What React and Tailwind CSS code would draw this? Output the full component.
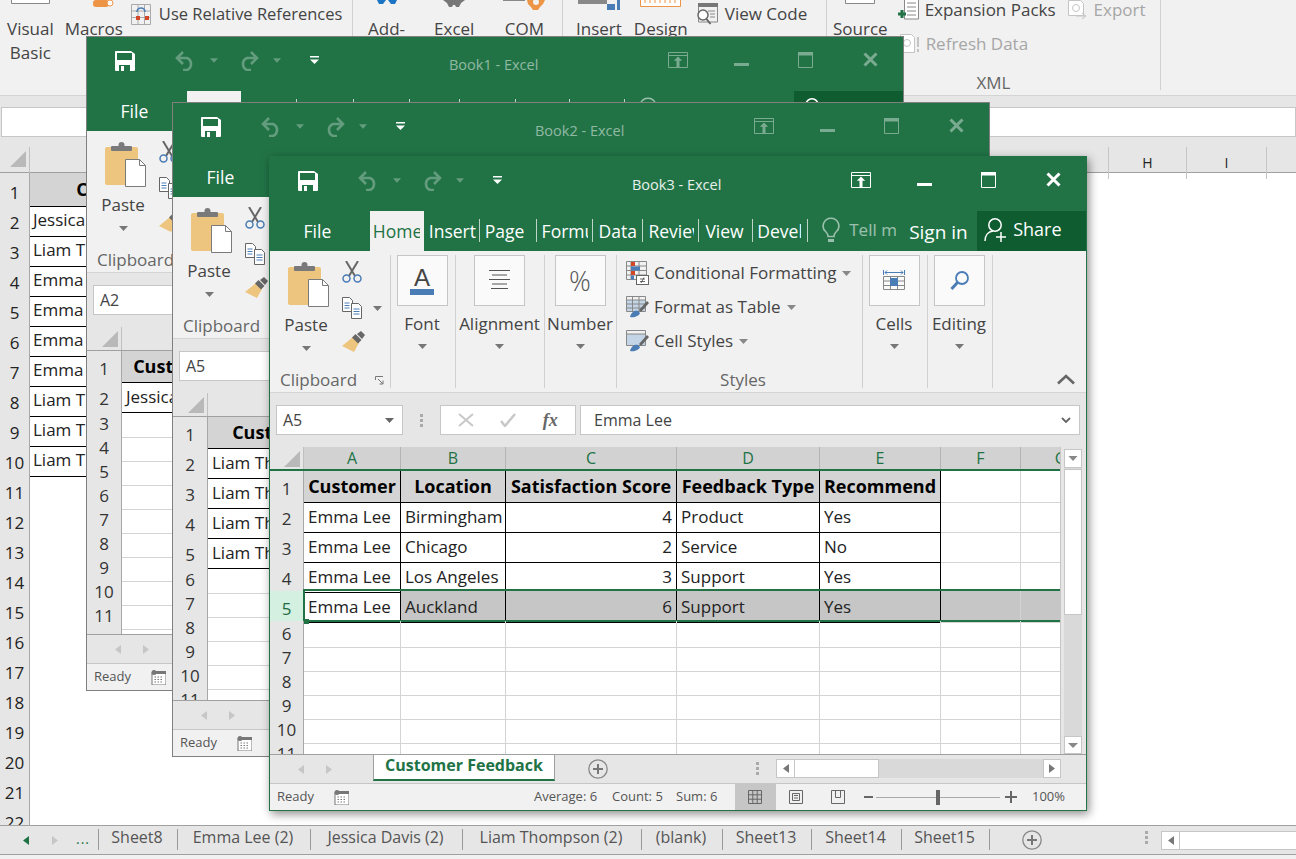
import React from 'react';

const GREEN = '#217346';

function Caret({ color = '#777777', w = 9, h = 5 }) {
  return (
    <svg width={w} height={h} viewBox="0 0 9 5" className="block shrink-0">
      <path d="M0 0h9L4.5 5z" fill={color} />
    </svg>
  );
}

function SaveIcon() {
  return (
    <svg width="20" height="20" viewBox="0 0 20 20" className="block">
      <path d="M1 0h15l4 3v16a1 1 0 0 1-1 1H1a1 1 0 0 1-1-1V1a1 1 0 0 1 1-1z" fill="#fff" />
      <rect x="2" y="2" width="15" height="7" fill={GREEN} />
      <rect x="4" y="14" width="11" height="6" fill={GREEN} />
      <rect x="6" y="15" width="3" height="5" fill="#fff" />
    </svg>
  );
}

function UndoIcon({ flip }) {
  return (
    <svg width="21" height="20" viewBox="0 0 21 20" className={flip ? 'block -scale-x-100' : 'block'}>
      <path d="M8 1 2 7l6 6M2 7h10a6.5 6.5 0 0 1 0 12H8" fill="none" stroke="#fff" strokeOpacity="0.3" strokeWidth="2.6" />
    </svg>
  );
}

function QatIcon() {
  return (
    <svg width="9" height="8" viewBox="0 0 9 8" className="block">
      <rect width="9" height="1.5" fill="#fff" />
      <path d="M0 3.4h9L4.5 8z" fill="#fff" />
    </svg>
  );
}

function DisplayIcon() {
  return (
    <svg width="20" height="16" viewBox="0 0 20 16" className="block">
      <path d="M.5.5h19v15H.5zM.5 3.5h19" fill="none" stroke="#fff" />
      <path d="M10 4.5l4.2 4.2h-2.7V15h-3V8.7H5.8z" fill="#fff" />
    </svg>
  );
}

function MaxIcon() {
  return (
    <svg width="15" height="16" viewBox="0 0 15 16" className="block">
      <path d="M.5.5h14v15H.5z" fill="none" stroke="#fff" />
      <rect width="15" height="3.5" fill="#fff" />
    </svg>
  );
}

function CloseIcon() {
  return (
    <svg width="15" height="15" viewBox="0 0 15 15" className="block">
      <path d="M1.5 1.5l12 12M13.5 1.5l-12 12" stroke="#fff" strokeWidth="3" />
    </svg>
  );
}

function BulbIcon() {
  return (
    <svg width="18" height="26" viewBox="0 0 18 26" className="block">
      <path d="M9 1.2a7.8 7.8 0 0 0-5 13.8c1.3 1.2 2 2.6 2 4.5h6c0-1.9.7-3.3 2-4.5A7.8 7.8 0 0 0 9 1.2z" fill="none" stroke="#fff" strokeOpacity="0.55" strokeWidth="1.6" />
      <path d="M6 22h6v3H6z" fill="#fff" fillOpacity="0.55" />
    </svg>
  );
}

function ShareIcon() {
  return (
    <svg width="24" height="26" viewBox="0 0 24 26" className="block">
      <circle cx="11" cy="8" r="6.2" fill="none" stroke="#fff" strokeWidth="1.5" />
      <path d="M1 24c0-6 3.5-9.500 8-10M17 15v10M12 20h10" fill="none" stroke="#fff" strokeWidth="1.5" />
    </svg>
  );
}

function PasteIcon() {
  return (
    <svg width="42" height="46" viewBox="0 0 42 46" className="block">
      <rect x="0" y="5" width="33" height="38" rx="2" fill="#edc57e" />
      <rect x="6" y="4" width="21" height="5" rx="1" fill="#7a7a7a" />
      <circle cx="16.500" cy="3" r="3" fill="#7a7a7a" />
      <path d="M20.500 17.500h14l6 6v21h-20z" fill="#fff" stroke="#7a7a7a" />
      <path d="M34.500 17.500v6h6" fill="none" stroke="#7a7a7a" />
    </svg>
  );
}

function ScissorsIcon() {
  return (
    <svg width="20" height="22" viewBox="0 0 20 22" className="block">
      <path d="M4 0l9 15M16 0l-9 15" stroke="#666" strokeWidth="2" />
      <circle cx="4.500" cy="17.500" r="3.500" fill="none" stroke="#4a7cb5" strokeWidth="1.5" />
      <circle cx="15.500" cy="17.500" r="3.500" fill="none" stroke="#4a7cb5" strokeWidth="1.5" />
    </svg>
  );
}

function CopyIcon() {
  return (
    <svg width="20" height="22" viewBox="0 0 20 22" className="block">
      <path d="M.5.5h7l3 3v11H.5z" fill="#fff" stroke="#666" />
      <path d="M2.500 6h5M2.500 8.500h5M2.500 11h5" stroke="#4a7cb5" />
      <path d="M9.500 6.500h7l3 3v12h-10z" fill="#fff" stroke="#666" />
      <path d="M11.500 12h6M11.500 14.500h6M11.500 17h6" stroke="#4a7cb5" />
    </svg>
  );
}

function BrushIcon() {
  return (
    <svg width="23" height="22" viewBox="0 0 23 22" className="block">
      <path d="M11 6l6 6-5 9-12-6z" fill="#edc57e" />
      <path d="M10 6.500L13.500 3l6 6-3.500 3.500z" fill="#666" />
      <path d="M15 3l4-3 4 4-3 4z" fill="#666" />
    </svg>
  );
}

function LauncherIcon() {
  return (
    <svg width="9" height="9" viewBox="0 0 9 9" className="block">
      <path d="M.5 4V.5H8M3 3l5 5M8 4.500V8H4.500" fill="none" stroke="#777" />
    </svg>
  );
}

function AlignIcon() {
  return (
    <svg width="21" height="22" viewBox="0 0 21 22" className="block">
      <path d="M0 .5h21M3 5h15M0 9.500h21M3 14h15M2 18.500h17" stroke="#555" />
    </svg>
  );
}

function CondFormatIcon() {
  return (
    <svg width="23" height="24" viewBox="0 0 23 24" className="block">
      <path d="M.5.5h20v18H.5zM.5 5h20M.5 9.500h20M.5 14h20M5 .5v18M13 .5v18" fill="none" stroke="#888" />
      <rect x="5" y="1" width="4" height="4" fill="#d24726" />
      <rect x="5" y="5.500" width="9" height="4" fill="#4a7cb5" />
      <rect x="5" y="10" width="4" height="4" fill="#d24726" />
      <rect x="5" y="14.500" width="3" height="4" fill="#4a7cb5" />
      <rect x="10.500" y="14.500" width="12" height="9" fill="#fff" stroke="#666" />
      <path d="M14 18h5M14 20.500h5M18 16.500l-3 5.500" stroke="#444" strokeWidth="0.8" />
    </svg>
  );
}

function TableStyleIcon({ plain }) {
  return (
    <svg width="23" height="22" viewBox="0 0 23 22" className="block">
      <rect x="1" y="4" width="18" height="11" fill="#c2d4e6" />
      <path d={plain ? 'M.5.5h19v15H.5zM.5 4h19' : 'M.5.5h19v15H.5zM.5 4h19M.5 8h19M.5 12h19M6.500 .5v15M13 .5v15'} fill="none" stroke="#888" />
      <path d="M13 14l8-9 2 2-8 9z" fill="#666" />
      <path d="M4 21c1-4 4-7 8-6l2 2c-1 3-6 5-10 4z" fill="#4a7cb5" />
    </svg>
  );
}

function CellsIcon() {
  return (
    <svg width="22" height="24" viewBox="0 0 22 24" className="block">
      <path d="M.5 1v5M21.500 1v5M2 3.500h18M2 3.500l2-2M2 3.500l2 2M20 3.500l-2-2M20 3.500l-2 2" fill="none" stroke="#4a7cb5" />
      <path d="M.5 7.500h21v13H.5zM7.500 7.500v13M14.500 7.500v13M.5 12h21M.5 16.500h21" fill="none" stroke="#888" />
      <rect x="7" y="9" width="8" height="8" fill="#4a7cb5" />
    </svg>
  );
}

function SearchIcon() {
  return (
    <svg width="19" height="20" viewBox="0 0 19 20" className="block">
      <circle cx="12" cy="7" r="6" fill="none" stroke="#4a7cb5" strokeWidth="1.8" />
      <path d="M7.500 11.500L1.500 18" stroke="#4a7cb5" strokeWidth="3" />
    </svg>
  );
}

function ChevronUp() {
  return (
    <svg width="18" height="11" viewBox="0 0 18 11" className="block">
      <path d="M1 9.500l8-7.500 8 7.500" fill="none" stroke="#666" strokeWidth="2.600" />
    </svg>
  );
}

function CalendarIcon() {
  return (
    <svg width="15" height="15" viewBox="0 0 15 15" className="block">
      <rect x="1" y="3" width="14" height="12" fill="#fff" stroke="#777" />
      <rect x="5" y="1" width="10" height="3" fill="#777" />
      <circle cx="3" cy="2.500" r="2.500" fill="#777" />
      <path d="M3.500 7h9M3.500 9.500h9M3.500 12h9" stroke="#777" strokeDasharray="1.500 1.500" />
    </svg>
  );
}

function PlusCircle({ size = 20 }) {
  return (
    <svg width={size} height={size} viewBox="0 0 20 20" className="block shrink-0">
      <circle cx="10" cy="10" r="9.200" fill="none" stroke="#888" strokeWidth="1.300" />
      <path d="M5 10h10M10 5v10" stroke="#777" strokeWidth="2" />
    </svg>
  );
}

function Dots() {
  return (
    <div className="flex flex-col gap-[2px]">
      <div className="h-[3px] w-[3px] bg-[#aaaaaa]" />
      <div className="h-[3px] w-[3px] bg-[#aaaaaa]" />
      <div className="h-[3px] w-[3px] bg-[#aaaaaa]" />
    </div>
  );
}

function ArrowLeft({ color = '#c6c6c6' }) {
  return (
    <svg width="6" height="9" viewBox="0 0 6 9" className="block">
      <path d="M6 0v9L0 4.500z" fill={color} />
    </svg>
  );
}

function ArrowRight({ color = '#c6c6c6' }) {
  return (
    <svg width="6" height="9" viewBox="0 0 6 9" className="block">
      <path d="M0 0v9l6-4.500z" fill={color} />
    </svg>
  );
}

function LargeButton({ icon, label, w }) {
  return (
    <div className={`flex flex-col items-center ${w}`}>
      <div className="flex h-[51px] w-[51px] items-center justify-center border border-[#c6c6c6] bg-[#fafafa]">{icon}</div>
      <div className="mt-[6px] whitespace-nowrap leading-[24px] text-[#444444]">{label}</div>
      <div className="mt-[8px]"><Caret /></div>
    </div>
  );
}

function StyleRow({ icon, label, caretGap }) {
  return (
    <div className="flex h-[34px] items-center">
      <div className="w-[28px]">{icon}</div>
      <span className="whitespace-nowrap text-[#444444]">{label}</span>
      <div className={caretGap}><Caret color="#888888" /></div>
    </div>
  );
}

function WindowRibbon() {
  return (
    <div className="flex h-[142px] border-b border-[#d4d4d4] bg-[#f1f1f1] pt-1 text-[17px]">
      <div className="flex h-[133px] w-[121px] flex-col border-r border-[#d0d0d0]">
        <div className="flex flex-1">
          <div className="ml-[18px] flex w-[42px] flex-col items-center pt-[7px]">
            <PasteIcon />
            <div className="-ml-[6px] mt-[5px] leading-[24px] text-[#444444]">Paste</div>
            <div className="-ml-[6px] mt-[9px]"><Caret /></div>
          </div>
          <div className="ml-[12px] flex flex-col pt-[6px]">
            <ScissorsIcon />
            <div className="mt-[14px] flex items-center gap-[11px]"><CopyIcon /><Caret /></div>
            <div className="mt-[12px]"><BrushIcon /></div>
          </div>
        </div>
        <div className="-mb-[4px] flex items-center pl-[10px] leading-[24px] text-[#666666]">
          <span>Clipboard</span>
          <div className="ml-[18px]"><LauncherIcon /></div>
        </div>
      </div>
      <div className="flex h-[133px] w-[65px] justify-center border-r border-[#d0d0d0] pr-[2px]">
        <LargeButton w="w-[51px]" label="Font" icon={
          <div className="flex flex-col items-center">
            <span className="font-['Liberation_Sans',sans-serif] text-[24px] leading-[22px] text-[#444444]">A</span>
            <div className="h-[6px] w-[24px] bg-[#4a7cb5]" />
          </div>
        } />
      </div>
      <div className="flex h-[133px] w-[89px] justify-center border-r border-[#d0d0d0] pr-[1px]">
        <LargeButton w="w-[51px]" label="Alignment" icon={<AlignIcon />} />
      </div>
      <div className="flex h-[133px] w-[72px] justify-center border-r border-[#d0d0d0] pr-[1px]">
        <LargeButton w="w-[51px]" label="Number" icon={<span className="text-[27px] font-light leading-none text-[#555555]">%</span>} />
      </div>
      <div className="flex h-[133px] w-[246px] flex-col border-r border-[#d0d0d0] pl-[9px] pt-[1px]">
        <StyleRow icon={<CondFormatIcon />} label="Conditional Formatting" caretGap="ml-[6px]" />
        <StyleRow icon={<TableStyleIcon />} label="Format as Table" caretGap="ml-[6px]" />
        <StyleRow icon={<TableStyleIcon plain />} label="Cell Styles" caretGap="ml-[6px]" />
        <div className="-mb-[4px] mt-auto pr-[2px] text-center leading-[24px] text-[#666666]">Styles</div>
      </div>
      <div className="flex h-[133px] w-[65px] justify-center border-r border-[#d0d0d0] pr-[2px]">
        <LargeButton w="w-[51px]" label="Cells" icon={<CellsIcon />} />
      </div>
      <div className="flex h-[133px] w-[65px] justify-center border-r border-[#d0d0d0] pr-[2px]">
        <LargeButton w="w-[51px]" label="Editing" icon={<SearchIcon />} />
      </div>
      <div className="flex h-[133px] flex-1 items-end justify-end pb-[3px] pr-[11px]"><ChevronUp /></div>
    </div>
  );
}

function FormulaBar({ name, value, active }) {
  return (
    <div className="flex h-[54px] items-start bg-[#e6e6e6] pl-[6px] pt-[12px] text-[16px] text-[#444444]">
      <div className="flex h-[30px] w-[127px] items-center justify-between border border-[#c6c6c6] bg-white pl-[6px] pr-[8px]">
        <span>{name}</span>
        <Caret color="#666666" />
      </div>
      <div className="flex h-[30px] w-[37px] items-center justify-center"><Dots /></div>
      <div className="flex h-[30px] w-[136px] items-center justify-around border border-[#c6c6c6] bg-white px-[4px]">
        <svg width="16" height="14" viewBox="0 0 16 14"><path d="M1 1l14 12M15 1L1 13" stroke="#c8c8c8" strokeWidth="2" /></svg>
        <svg width="16" height="14" viewBox="0 0 16 14"><path d="M1 8l4 5L15 1" fill="none" stroke="#c8c8c8" strokeWidth="2.500" /></svg>
        <span className="font-['Liberation_Serif',serif] text-[18px] font-bold italic leading-none text-[#666666]">fx</span>
      </div>
      <div className="ml-[4px] flex h-[30px] w-[500px] items-center justify-between border border-[#c6c6c6] bg-white pl-[13px] pr-[8px]">
        <span>{value}</span>
        {active && <svg width="10" height="6" viewBox="0 0 10 6"><path d="M1 1l4 4 4-4" fill="none" stroke="#666" strokeWidth="1.800" /></svg>}
      </div>
    </div>
  );
}

function Corner() {
  return <div className="ml-auto mr-[3px] mt-[4px] h-0 w-0 border-b-[16px] border-l-[16px] border-b-[#b9b9b9] border-l-transparent" />;
}

function Sheet({ cols, letters, lastTableCol, rows, tallRows, totalRows, selected, active }) {
  const rowNums = Array.from({ length: totalRows }, (_, i) => i + 1);
  return (
    <div className="min-w-0 flex-1 overflow-hidden border-r border-[#c6c6c6]">
      <div className={`grid ${cols} h-[24px] ${active ? 'border-b-2 border-[#217346]' : 'border-b border-[#a0a0a0]'}`}>
        <div className="border-r border-[#c0c0c0] bg-[#e6e6e6]"><Corner /></div>
        {letters.map((l) => (
          <div key={l} className={`overflow-hidden border-r border-[#b4b4b4] text-center text-[16px] leading-[22px] ${active ? 'bg-[#d2d2d2] text-[#217346]' : 'bg-[#e6e6e6] text-[#444444]'}`}>{l}</div>
        ))}
      </div>
      {rowNums.map((n) => {
        const row = rows[n - 1];
        const isSel = n === selected;
        return (
          <div key={n} className={`relative grid ${cols} ${n <= tallRows ? 'h-[30px]' : 'h-[24px]'} text-[17px]`}>
            <div className={`flex items-center justify-center border-b border-r border-[#a8a8a8] ${n <= tallRows ? 'pt-[5px]' : ''} ${isSel ? 'bg-[#d3f0e0] text-[#1e6b40]' : 'bg-[#e6e6e6] text-[#333333]'}`}>{n}</div>
            {letters.map((l, i) => {
              const inTable = row && i <= lastTableCol;
              const text = row ? row[i] : '';
              const isHead = n === 1 && inTable;
              const isNum = row && typeof text === 'number';
              return (
                <div
                  key={l}
                  className={`flex items-center overflow-hidden whitespace-nowrap border-b border-r pt-[1px] ${
                    inTable ? 'border-black' : 'border-[#d4d4d4]'
                  } ${isHead ? 'justify-center bg-[#d4d4d4] text-[18px] font-bold text-black' : 'px-[4px] text-[#222222]'} ${
                    isNum ? 'justify-end' : ''
                  } ${isSel && i > 0 ? 'bg-[#c6c6c6]' : ''} ${isSel && !inTable ? 'border-[#adadad]' : ''}`}
                >
                  {text}
                </div>
              );
            })}
            {isSel && active && (
              <>
                <div className="pointer-events-none absolute bottom-[-1px] left-[33px] right-0 top-[-2px] border-y-2 border-l-2 border-[#217346]" />
                <div className="absolute bottom-[-3px] left-[34px] h-[5px] w-[5px] bg-[#217346]" />
              </>
            )}
          </div>
        );
      })}
    </div>
  );
}

function VScroll() {
  return (
    <div className="flex w-[25px] shrink-0 flex-col bg-[#e6e6e6] pl-[3px] pr-[4px] pt-[2px]">
      <div className="flex h-[19px] items-center justify-center border border-[#c6c6c6] bg-white"><Caret color="#888888" w={10} h={5} /></div>
      <div className="flex-1 bg-[#d9d9d9] pt-[1px]">
        <div className="h-[146px] border border-[#c6c6c6] bg-white" />
      </div>
      <div className="flex h-[18px] items-center justify-center border border-[#c6c6c6] bg-white"><svg width="10" height="5" viewBox="0 0 10 5" className="block"><path d="M0 0h10L5 5z" fill="#888" /></svg></div>
    </div>
  );
}

function SheetTabs() {
  return (
    <div className="flex h-[29px] items-start border-t border-[#a0a0a0] bg-[#e6e6e6]">
      <div className="flex h-[28px] w-[103px] items-center pl-[28px]">
        <ArrowLeft />
        <div className="ml-[22px]"><ArrowRight /></div>
      </div>
      <div className="flex h-[26px] w-[182px] items-center justify-center border-x border-b-2 border-x-[#a0a0a0] border-b-[#217346] bg-white pb-[4px] text-[16px] font-bold text-[#217346]">Customer Feedback</div>
      <div className="ml-[33px] mt-[4px]"><PlusCircle size={20} /></div>
      <div className="ml-[148px] mt-[7px]"><Dots /></div>
      <div className="ml-[17px] mt-[4px] flex h-[19px] w-[285px]">
        <div className="flex w-[19px] items-center justify-center border border-[#c6c6c6] bg-white"><ArrowLeft color="#777777" /></div>
        <div className="w-[84px] border-y border-r border-[#c6c6c6] bg-white" />
        <div className="flex-1 bg-[#d9d9d9]" />
        <div className="flex w-[18px] items-center justify-center border border-[#c6c6c6] bg-white"><ArrowRight color="#777777" /></div>
      </div>
    </div>
  );
}

function StatusBar() {
  return (
    <div className="flex h-[27px] items-center border-t border-[#c6c6c6] bg-[#f1f1f1] text-[13px] text-[#555555]">
      <span className="ml-[7px] w-[57px]">Ready</span>
      <CalendarIcon />
      <span className="ml-[185px] w-[78px] whitespace-nowrap">Average: 6</span>
      <span className="w-[64px] whitespace-nowrap">Count: 5</span>
      <span className="w-[59px] whitespace-nowrap">Sum: 6</span>
      <div className="flex h-full w-[41px] items-center justify-center bg-[#c6c6c6] pr-[1px]">
        <svg width="14" height="14" viewBox="0 0 14 14"><path d="M.5.5h13v13H.5zM.5 4.800h13M.5 9.200h13M4.800.5v13M9.200.5v13" fill="none" stroke="#666" /></svg>
      </div>
      <div className="flex h-full w-[41px] items-center justify-center pr-[1px]">
        <svg width="14" height="14" viewBox="0 0 14 14"><path d="M.5.5h13v13H.5zM3.500 3.500h7v7h-7zM5 5.500h4M5 8h4" fill="none" stroke="#666" /></svg>
      </div>
      <div className="flex h-full w-[41px] items-center justify-center">
        <svg width="14" height="14" viewBox="0 0 14 14"><path d="M.5.5h13v13H.5zM4.500.5v7h5v-7" fill="none" stroke="#666" /></svg>
      </div>
      <div className="ml-[6px] h-[2px] w-[9px] bg-[#666666]" />
      <div className="relative ml-[3px] h-[1px] w-[124px] bg-[#aaaaaa]">
        <div className="absolute left-[60px] top-[-7px] h-[15px] w-[4px] bg-[#666666]" />
      </div>
      <svg width="12" height="12" viewBox="0 0 12 12" className="ml-[5px]"><path d="M0 6h12M6 0v12" stroke="#666" strokeWidth="2" /></svg>
      <span className="ml-[15px]">100%</span>
    </div>
  );
}

function ExcelWindow({ title, pos, active, nameBox, formula, cols, letters, lastTableCol, rows, tallRows, totalRows, selected }) {
  const dim = active ? '' : 'opacity-40';
  return (
    <div className={`absolute flex h-[655px] w-[818px] flex-col border ${pos} ${active ? 'border-[#217346] shadow-[2px_3px_9px_rgba(0,0,0,0.45)]' : 'border-[#808080]'}`}>
      <div className="bg-[#217346] text-white">
        <div className="flex h-[54px] items-start pt-[14px]">
          <div className="ml-[28px]"><SaveIcon /></div>
          <div className="ml-[40px]"><UndoIcon /></div>
          <div className="ml-[14px] mt-[7px] opacity-30"><Caret color="#ffffff" w={8} /></div>
          <div className="ml-[20px]"><UndoIcon flip /></div>
          <div className="ml-[14px] mt-[7px] opacity-30"><Caret color="#ffffff" w={8} /></div>
          <div className="ml-[29px] mt-[5px]"><QatIcon /></div>
          <div className={`ml-[130px] mt-[3px] w-[219px] whitespace-nowrap text-[14.5px] ${active ? 'text-white/90' : 'text-white/50'}`}>{title}</div>
          <div className={`mt-[1px] ${dim}`}><DisplayIcon /></div>
          <div className={`ml-[46px] mt-[12px] h-[3px] w-[15px] bg-white ${dim}`} />
          <div className={`ml-[49px] mt-[1px] ${dim}`}><MaxIcon /></div>
          <div className={`ml-[50px] mt-[1px] ${dim}`}><CloseIcon /></div>
        </div>
        <div className="flex h-[40px] whitespace-nowrap text-[17.5px]">
          <div className="flex w-[100px] items-center justify-center pr-[5px] pt-[1px]">File</div>
          <div className="flex w-[54px] items-center overflow-hidden bg-[#f1f1f1] pl-[3px] pt-[1px] text-[#217346]"><span className="w-[47px] overflow-hidden">Home</span></div>
          {[
            ['Insert', 'w-[56px] pl-[5px]', 'w-[48px]'],
            ['Page', 'w-[57px] pl-[5px]', 'w-[47px]'],
            ['Formulas', 'w-[56px] pl-[5px]', 'w-[46px]'],
            ['Data', 'w-[51px] pl-[6px]', 'w-[42px]'],
            ['Review', 'w-[56px] pl-[5px]', 'w-[46px]'],
            ['View', 'w-[54px] pl-[6px]', 'w-[45px]'],
            ['Developer', 'w-[55px] pl-[4px]', 'w-[44px]'],
          ].map(([label, w, inner]) => (
            <div key={label} className={`mt-[8px] flex h-[23px] items-center border-r border-white/70 pt-[1px] ${w}`}>
              <span className={`overflow-hidden ${inner}`}>{label}</span>
            </div>
          ))}
          <div className="ml-[14px] mt-[6px]"><BulbIcon /></div>
          <div className="ml-[9px] mt-[6px] w-[47px] overflow-hidden text-[17px] text-white/55">Tell me what you want to do</div>
          <div className="ml-[13px] flex w-[58px] items-center pt-[2px] text-[19px]">Sign in</div>
          <div className="ml-[10px] flex w-[109px] items-center bg-[#0e5c2f] pb-[3px] pl-[7px] text-[18px]">
            <ShareIcon />
            <span className="ml-[5px]">Share</span>
          </div>
        </div>
      </div>
      <WindowRibbon />
      <FormulaBar name={nameBox} value={formula} active={active} />
      <div className="flex min-h-0 flex-1 overflow-hidden bg-white">
        <Sheet cols={cols} letters={letters} lastTableCol={lastTableCol} rows={rows} tallRows={tallRows} totalRows={totalRows} selected={selected} active={active} />
        <VScroll />
      </div>
      <SheetTabs />
      <StatusBar />
    </div>
  );
}

const BOOK3_ROWS = [
  ['Customer', 'Location', 'Satisfaction Score', 'Feedback Type', 'Recommend', '', ''],
  ['Emma Lee', 'Birmingham', 4, 'Product', 'Yes', '', ''],
  ['Emma Lee', 'Chicago', 2, 'Service', 'No', '', ''],
  ['Emma Lee', 'Los Angeles', 3, 'Support', 'Yes', '', ''],
  ['Emma Lee', 'Auckland', 6, 'Support', 'Yes', '', ''],
];

const BOOK2_ROWS = [
  ['Customer', 'Location', 'Satisfaction Score', 'Feedback Type', 'Recommend', '', ''],
  ['Liam Thompson', 'Sydney', 5, 'Service', 'Yes', '', ''],
  ['Liam Thompson', 'Dublin', 3, 'Support', 'No', '', ''],
  ['Liam Thompson', 'Toronto', 7, 'Product', 'Yes', '', ''],
  ['Liam Thompson', 'Boston', 4, 'Service', 'Yes', '', ''],
];

const BOOK1_ROWS = [
  ['Customer', 'Location', 'Satisfaction Score', 'Feedback Type', 'Recommend', '', ''],
  ['Jessica Davis', 'Seattle', 8, 'Product', 'Yes', '', ''],
];

const LETTERS = ['A', 'B', 'C', 'D', 'E', 'F', 'G'];

const BACK_NAMES = ['Jessica Davis', 'Liam Thompson', 'Emma Lee', 'Emma Lee', 'Emma Lee', 'Emma Lee', 'Liam Thompson', 'Liam Thompson', 'Liam Thompson'];

function TopLarge({ icon, lines, ml }) {
  return (
    <div className={`flex flex-col items-center ${ml}`}>
      <div className="h-[17px]">{icon}</div>
      {lines.map((l) => <div key={l} className="whitespace-nowrap leading-[24px]">{l}</div>)}
    </div>
  );
}

function BackRibbon() {
  return (
    <div className="flex h-[96px] shrink-0 overflow-hidden border-b border-[#d4d4d4] bg-[#f1f1f1] text-[17px] text-[#444444]">
      <div className="flex h-[90px] w-[353px] items-start border-r border-[#d0d0d0]">
        <TopLarge ml="ml-[7px]" lines={['Visual', 'Basic']} icon={<svg width="39" height="4" viewBox="0 0 39 4" className="block"><path d="M.5 0v3.500h38V0" fill="#fff" stroke="#888" /></svg>} />
        <TopLarge ml="ml-[11px]" lines={['Macros']} icon={<svg width="21" height="8" viewBox="0 0 21 8" className="block translate-x-[10px]"><rect width="16" height="7" rx="3" fill="#ed9446" /><circle cx="17" cy="3" r="3" fill="#fff" stroke="#ed9446" /></svg>} />
        <div className="ml-[8px] mt-[2px] flex items-center">
          <svg width="20" height="21" viewBox="0 0 20 21" className="block">
            <path d="M.5.5h19v20H.5zM.5 7h19M.5 13.500h19M7 .5v20M13.500 .5v20" fill="none" stroke="#aaa" />
            <rect x="5" y="12" width="4" height="4" fill="#d24726" />
            <rect x="14" y="12" width="4" height="4" fill="#d24726" />
            <path d="M6 8a4 4 0 0 1 8 0" fill="none" stroke="#4a7cb5" strokeWidth="1.600" />
          </svg>
          <span className="ml-[8px] whitespace-nowrap text-[16.5px]">Use Relative References</span>
        </div>
      </div>
      <div className="flex h-[90px] w-[210px] items-start border-r border-[#d0d0d0]">
        <TopLarge ml="ml-[15px]" lines={['Add-']} icon={<svg width="20" height="4" viewBox="0 0 20 4" className="block"><path d="M0 0h9l-3 4H2zM11 0h9l-2 4h-4z" fill="#1b74c4" /></svg>} />
        <TopLarge ml="ml-[29px]" lines={['Excel']} icon={<svg width="22" height="7" viewBox="0 0 22 7" className="block"><path d="M0 0h22l-4 3-2 4h-3l-1-2h-2l-1 2H6L4 3z" fill="#777" /></svg>} />
        <TopLarge ml="ml-[29px]" lines={['COM']} icon={<svg width="42" height="10" viewBox="0 0 42 10" className="block"><path d="M0 .5h22" stroke="#888" /><path d="M24 0h18l-2 4-3 3-2 3h-5l-2-3-3-3z" fill="#ed9446" /><circle cx="33" cy="2" r="3" fill="#f1f1f1" /></svg>} />
      </div>
      <div className="flex h-[90px] w-[264px] items-start border-r border-[#d0d0d0]">
        <TopLarge ml="ml-[13px]" lines={['Insert']} icon={<svg width="42" height="10" viewBox="0 0 42 10" className="block"><rect width="29" height="4" fill="#888" /><rect x="29" y="4" width="8" height="6" fill="#4a7cb5" /><rect x="39" y="0" width="3" height="10" fill="#4a7cb5" /></svg>} />
        <TopLarge ml="ml-[12px]" lines={['Design']} icon={<svg width="41" height="7" viewBox="0 0 41 7" className="block"><path d="M.5 0v6.500h40V0" fill="#fff" stroke="#ed9446" /><path d="M5 0v3M10 0v3M15 0v3M20 0v3M25 0v3M30 0v3M35 0v3" stroke="#ed9446" /></svg>} />
        <div className="ml-[8px] mt-[1px] flex items-center">
          <svg width="23" height="22" viewBox="0 0 23 22" className="block">
            <rect x="2" y="0" width="20" height="4" fill="#777" />
            <path d="M2.500 4v15h19V4M12 8h7M14 11h5M14 14h5" fill="none" stroke="#888" />
            <circle cx="7" cy="12" r="5" fill="#fff" stroke="#666" strokeWidth="1.500" />
            <path d="M10.500 16l4 5" stroke="#666" strokeWidth="2" />
          </svg>
          <span className="ml-[6px] whitespace-nowrap">View Code</span>
        </div>
      </div>
      <div className="flex h-[90px] w-[334px] flex-col border-r border-[#d0d0d0]">
        <div className="flex items-start">
          <TopLarge ml="ml-[6px]" lines={['Source']} icon={<svg width="30" height="4" viewBox="0 0 30 4" className="block"><path d="M.5 0v3.500h29V0" fill="#fff" stroke="#888" /></svg>} />
          <div className="ml-[10px] flex flex-col">
            <div className="-mt-[3px] flex h-[26px] items-center">
              <svg width="21" height="22" viewBox="0 0 21 22" className="block">
                <path d="M6.500 0v20h14V0" fill="#fff" stroke="#888" />
                <path d="M9 4h9M9 8h9M9 12h9M9 16h9" stroke="#888" />
                <path d="M0 15h8M4 11v8" stroke="#217346" strokeWidth="3" />
              </svg>
              <span className="ml-[6px] whitespace-nowrap">Expansion Packs</span>
              <svg width="20" height="20" viewBox="0 0 20 20" className="ml-[12px] block">
                <path d="M.5.5h12l3 3v12H.5z" fill="#fff" stroke="#c4c4c4" />
                <circle cx="8" cy="8" r="3.500" fill="none" stroke="#c4c4c4" />
                <path d="M8 16l9 0M14 13l4 3-4 3" fill="none" stroke="#c4c4c4" />
              </svg>
              <span className="ml-[6px] text-[#a6a6a6]">Export</span>
            </div>
            <div className="mt-[8px] flex h-[26px] items-center pl-[2px] text-[#a6a6a6]">
              <svg width="20" height="20" viewBox="0 0 20 20" className="block">
                <path d="M.5.5h11l3 3v15H.5z" fill="#fff" stroke="#c4c4c4" />
                <circle cx="7" cy="9" r="3.500" fill="none" stroke="#c4c4c4" />
                <path d="M18 3v10M18 15v3" stroke="#c4c4c4" strokeWidth="2" />
              </svg>
              <span className="ml-[6px] whitespace-nowrap">Refresh Data</span>
            </div>
          </div>
        </div>
        <div className="mt-auto -mb-[4px] text-center leading-[22px] text-[#666666]">XML</div>
      </div>
    </div>
  );
}

function BackGrid() {
  const rows = Array.from({ length: 22 }, (_, i) => i + 1);
  return (
    <div className="min-h-0 flex-1 overflow-hidden bg-white">
      <div className="grid h-[26px] grid-cols-[30px_1079px_78px_80px_1fr] border-b border-[#a0a0a0] bg-[#e6e6e6] text-center text-[14px] leading-[32px] text-[#222222]">
        <div className="border-r border-[#c0c0c0]"><Corner /></div>
        <div className="border-r border-[#c6c6c6]" />
        <div className="border-r border-[#c6c6c6]">H</div>
        <div className="border-r border-[#c6c6c6]">I</div>
        <div />
      </div>
      {rows.map((n) => (
        <div key={n} className="grid h-[30px] grid-cols-[30px_181px_1fr] text-[17px] text-[#222222]">
          <div className="flex items-center justify-center border-b border-r border-[#a8a8a8] bg-[#e6e6e6] pt-[7px]">{n}</div>
          {n === 1 && <div className="flex items-center justify-center border-b border-r border-black bg-[#d4d4d4] pt-[1px] text-[18px] font-bold text-black">Customer</div>}
          {n > 1 && n <= 10 && <div className="flex items-center whitespace-nowrap border-b border-r border-black px-[3px]">{BACK_NAMES[n - 2]}</div>}
        </div>
      ))}
    </div>
  );
}

function BackTabs() {
  const tabs = [
    ['Sheet8', 'w-[79px]'],
    ['Emma Lee (2)', 'w-[133px]'],
    ['Jessica Davis (2)', 'w-[152px]'],
    ['Liam Thompson (2)', 'w-[179px]'],
    ['(blank)', 'w-[81px]'],
    ['Sheet13', 'w-[89px]'],
    ['Sheet14', 'w-[90px]'],
    ['Sheet15', 'w-[88px]'],
  ];
  return (
    <div className="flex h-[30px] shrink-0 border-y border-[#a0a0a0] bg-[#e6e6e6] text-[16px] text-[#555555]">
      <div className="flex w-[98px] items-center pl-[23px]">
        <ArrowLeft color="#217346" />
        <div className="ml-[23px]"><ArrowRight /></div>
        <span className="ml-[18px] -mt-[2px] text-[14px] leading-none tracking-[1px] text-[#217346]">...</span>
      </div>
      <div className="mt-[3px] h-[21px] w-0 border-r border-[#999999]" />
      {tabs.map(([label, w]) => (
        <div key={label} className={`mt-[3px] flex h-[21px] items-center justify-center whitespace-nowrap border-r border-[#999999] pb-[6px] pr-[2px] ${w}`}>{label}</div>
      ))}
      <div className="ml-[32px] mt-[4px]"><PlusCircle size={20} /></div>
      <div className="ml-[103px] mt-[5px]"><Dots /></div>
      <div className="ml-[13px] mt-[5px] flex h-[19px] flex-1">
        <div className="flex w-[19px] items-center justify-center border border-[#c6c6c6] bg-white"><ArrowLeft color="#777777" /></div>
        <div className="flex-1 border-y border-[#c6c6c6] bg-white" />
      </div>
    </div>
  );
}

export default function App() {
  return (
    <div className="relative flex h-[859px] w-[1296px] flex-col overflow-hidden bg-white font-['Open_Sans',sans-serif]">
      <BackRibbon />
      <div className="h-[51px] shrink-0 bg-[#e6e6e6] pl-[1px] pr-0 pt-[11px]">
        <div className="h-[30px] border border-[#c6c6c6] bg-white" />
      </div>
      <BackGrid />
      <BackTabs />
      <div className="h-[4px] shrink-0 bg-[#f1f1f1]" />

      <ExcelWindow
        title="Book1 - Excel"
        pos="left-[86px] top-[36px]"
        nameBox="A2"
        formula="Jessica Davis"
        cols="grid-cols-[35px_111px_105px_171px_143px_121px_80px_80px]"
        letters={LETTERS}
        lastTableCol={4}
        rows={BOOK1_ROWS}
        tallRows={2}
        totalRows={13}
      />
      <ExcelWindow
        title="Book2 - Excel"
        pos="left-[172px] top-[102px]"
        nameBox="A5"
        formula="Liam Thompson"
        cols="grid-cols-[35px_137px_105px_171px_143px_121px_80px_80px]"
        letters={LETTERS}
        lastTableCol={4}
        rows={BOOK2_ROWS}
        tallRows={5}
        totalRows={11}
      />
      <ExcelWindow
        active
        title="Book3 - Excel"
        pos="left-[269px] top-[156px]"
        nameBox="A5"
        formula="Emma Lee"
        cols="grid-cols-[34px_97px_105px_171px_143px_121px_80px_80px]"
        letters={LETTERS}
        lastTableCol={4}
        rows={BOOK3_ROWS}
        tallRows={5}
        totalRows={11}
        selected={5}
      />
    </div>
  );
}
